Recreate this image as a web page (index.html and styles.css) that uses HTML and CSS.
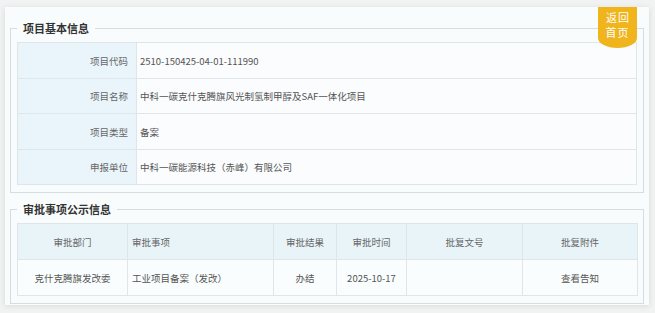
FILE: index.html
```html
<!DOCTYPE html>
<html lang="zh-CN">
<head>
<meta charset="utf-8">
<title>项目信息</title>
<link rel="stylesheet" href="styles.css">
</head>
<body>
<div class="card">
  <a class="home-badge" href="#">返回<br>首页</a>

  <fieldset class="group">
    <legend class="group-title">项目基本信息</legend>
    <table class="info-table">
      <tr class="r1"><th>项目代码</th><td>2510-150425-04-01-111990</td></tr>
      <tr class="r2"><th>项目名称</th><td>中科一碳克什克腾旗风光制氢制甲醇及SAF一体化项目</td></tr>
      <tr class="r1"><th>项目类型</th><td>备案</td></tr>
      <tr class="r2"><th>申报单位</th><td>中科一碳能源科技（赤峰）有限公司</td></tr>
    </table>
  </fieldset>

  <fieldset class="group group-2">
    <legend class="group-title">审批事项公示信息</legend>
    <table class="approval-table">
      <colgroup>
        <col class="c-dept"><col class="c-item"><col class="c-result"><col class="c-time"><col class="c-doc"><col class="c-file">
      </colgroup>
      <thead>
        <tr><th>审批部门</th><th class="left">审批事项</th><th>审批结果</th><th>审批时间</th><th>批复文号</th><th>批复附件</th></tr>
      </thead>
      <tbody>
        <tr><td>克什克腾旗发改委</td><td class="left">工业项目备案（发改）</td><td>办结</td><td>2025-10-17</td><td></td><td>查看告知</td></tr>
      </tbody>
    </table>
  </fieldset>
</div>
</body>
</html>
```

FILE: styles.css
```css
html, body {
  margin: 0;
  padding: 0;
}
body {
  background: #f1f2f2;
  font-family: "Noto Sans CJK SC", "Noto Sans", sans-serif;
  color: #555;
  width: 655px;
  height: 313px;
  overflow: hidden;
}
.card {
  position: relative;
  box-sizing: border-box;
  margin: 7px 0 0 5px;
  width: 644px;
  height: 298px;
  background: #f9fcfd;
  box-shadow: 0 1px 6px rgba(0, 0, 0, 0.10);
  padding: 14px 5px 0 5px;
}
.home-badge {
  position: absolute;
  top: 0;
  right: 12px;
  width: 39px;
  height: 41px;
  box-sizing: border-box;
  padding-top: 3px;
  background: #f0b41c;
  color: #fff;
  text-decoration: none;
  text-align: center;
  font-size: 11px;
  line-height: 15px;
  letter-spacing: 1px;
  text-indent: 1px;
  border-radius: 0 0 50% 50% / 0 0 10px 10px;
}
.group {
  margin: 0;
  padding: 7px 6px 7px 6px;
  border: 1px solid #d8dcde;
  min-width: 0;
}
.group-2 {
  margin-top: 9px;
}
.group-title {
  padding: 0 6px;
  font-size: 11px;
  line-height: 14px;
  font-weight: bold;
  color: #333;
}
table {
  border-collapse: collapse;
  width: 620px;
  table-layout: fixed;
  font-size: 9.5px;
}
th, td {
  border: 1px solid #dfe5e8;
  padding: 0;
  font-weight: normal;
  white-space: nowrap;
}
.info-table th {
  width: 110px;
  background: #e9f4fb;
  text-align: right;
  padding-right: 8px;
  color: #666;
}
.info-table td {
  background: #fafcfd;
  padding-left: 3px;
  color: #555;
}
.info-table .r1 th, .info-table .r1 td { height: 35px; }
.info-table .r2 th, .info-table .r2 td { height: 34px; }

.approval-table th, .approval-table td {
  text-align: center;
  height: 35px;
}
.approval-table th {
  background: #e9f4f9;
  color: #666;
}
.approval-table td {
  background: #fafdfd;
  color: #555;
}
.approval-table .left {
  text-align: left;
  padding-left: 4px;
}
.c-dept { width: 110px; }
.c-item { width: 146px; }
.c-result { width: 63px; }
.c-time { width: 70px; }
.c-doc { width: 116px; }
.c-file { width: 115px; }
```
